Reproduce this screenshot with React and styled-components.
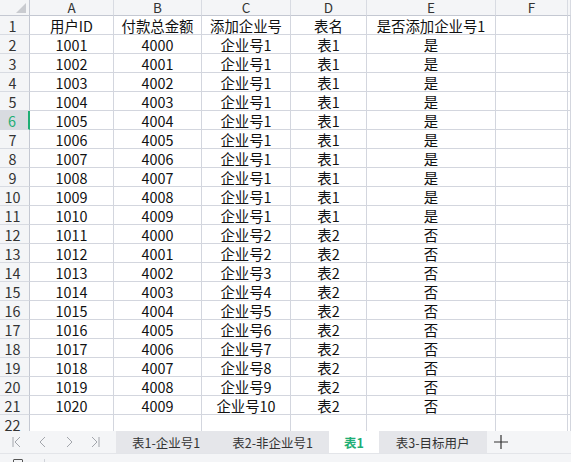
import React from "react";
import styled, { createGlobalStyle } from "styled-components";

const Global = createGlobalStyle`
  html, body { margin: 0; padding: 0; background: #fff; }
  body { width: 571px; height: 462px; overflow: hidden;
    font-family: "Microsoft YaHei", "Noto Sans CJK SC", "Noto Sans", sans-serif; }
`;

const Page = styled.div`
  width: 571px;
  height: 462px;
  display: flex;
  flex-direction: column;
  overflow: hidden;
`;

const SheetArea = styled.div`
  height: 431px;
  overflow: hidden;
  flex: none;
`;

const Grid = styled.div`
  display: grid;
  grid-template-columns: 30px 84px 88px 89px 76px 129px 72px 1fr;
  grid-auto-rows: 19px;
  grid-template-rows: 16px;
`;

const Cell = styled.div`
  box-sizing: border-box;
  border-right: 1px solid #d3d6de;
  border-bottom: 1px solid #d3d6de;
  font-size: 14.4px;
  line-height: 19px;
  color: #111;
  text-align: center;
  white-space: nowrap;
`;

const ColHead = styled(Cell)`
  background: #f4f5f7;
  color: #333;
  font-size: 13.5px;
  line-height: 15px;
  border-right-color: #d8dbe2;
  border-bottom-color: #c4c8d2;
`;

const Corner = styled(ColHead)`
  position: relative;
  border-right-color: #c4c8d2;
  &::after {
    content: "";
    position: absolute;
    right: 3px;
    bottom: 2px;
    width: 0;
    height: 0;
    border-left: 10px solid transparent;
    border-bottom: 10px solid #c9cbd0;
  }
`;

const RowHead = styled(Cell)`
  background: ${(p) => (p.$active ? "#d8dbe0" : "#f4f5f7")};
  color: ${(p) => (p.$active ? "#1fae74" : "#333")};
  border-right: ${(p) => (p.$active ? "2px solid #1fae74" : "1px solid #c4c8d2")};
  border-bottom-color: #d8dbe2;
  padding-right: 4px;
`;

const TabBar = styled.div`
  height: 22px;
  flex: none;
  display: flex;
  align-items: stretch;
  background: #f4f5f7;
  border-bottom: 1px solid #e3e5e9;
`;

const NavGroup = styled.div`
  width: 116px;
  display: flex;
  align-items: center;
  padding-left: 10px;
  box-sizing: border-box;
  gap: 12px;
  color: #a3a6ac;
`;

const Tabs = styled.div`
  display: flex;
  background: #e5e6ea;
`;

const Tab = styled.div`
  padding: 0 ${(p) => p.$pad || 16}px;
  display: flex;
  align-items: center;
  font-size: 12.5px;
  color: ${(p) => (p.$active ? "#1fae74" : "#333")};
  font-weight: ${(p) => (p.$active ? 700 : 400)};
  background: ${(p) => (p.$active ? "#fff" : "transparent")};
  white-space: nowrap;
`;

const AddBtn = styled.div`
  width: 28px;
  display: flex;
  align-items: center;
  justify-content: center;
  color: #333;
`;

const StatusBar = styled.div`
  flex: 1;
  background: #f4f5f7;
  display: flex;
  align-items: flex-start;
  padding-top: 5px;
  box-sizing: border-box;
`;

const StatusIcon = styled.div`
  width: 10px;
  height: 10px;
  margin-left: 13px;
  border: 1.5px solid #555;
  border-radius: 1px;
  box-sizing: border-box;
`;

const Divider = styled.div`
  width: 1px;
  height: 10px;
  background: #d0d3d9;
  margin-left: 21px;
`;

const Nav = ({ d }) => (
  <svg width="14" height="14" viewBox="0 0 14 14" fill="none" stroke="currentColor" strokeWidth="1">
    {d}
  </svg>
);

const cols = ["A", "B", "C", "D", "E", "F"];

const rows = [["用户ID", "付款总金额", "添加企业号", "表名", "是否添加企业号1", ""]];
for (let i = 0; i < 20; i++) {
  const first = i < 10;
  rows.push([
    String(1001 + i),
    String(4000 + (i % 10)),
    first ? "企业号1" : `企业号${Math.max(2, i - 9)}`,
    first ? "表1" : "表2",
    first ? "是" : "否",
    "",
  ]);
}
rows.push(["", "", "", "", "", ""]);

export default function App() {
  return (
    <Page>
      <Global />
      <SheetArea>
        <Grid>
          <Corner />
          {cols.map((c) => (
            <ColHead key={c}>{c}</ColHead>
          ))}
          <ColHead />
          {rows.map((r, i) => (
            <React.Fragment key={i}>
              <RowHead $active={i === 5}>{i + 1}</RowHead>
              {r.map((v, j) => (
                <Cell key={j}>{v}</Cell>
              ))}
              <Cell />
            </React.Fragment>
          ))}
        </Grid>
      </SheetArea>
      <TabBar>
        <NavGroup>
          <Nav d={<><path d="M3 2v10" /><path d="M10 2 5 7l5 5" /></>} />
          <Nav d={<path d="M9 2 4 7l5 5" />} />
          <Nav d={<path d="M5 2l5 5-5 5" />} />
          <Nav d={<><path d="M11 2v10" /><path d="M4 2l5 5-5 5" /></>} />
        </NavGroup>
        <Tabs>
          <Tab $pad={16}>表1-企业号1</Tab>
          <Tab $pad={16}>表2-非企业号1</Tab>
          <Tab $active $pad={15}>表1</Tab>
          <Tab $pad={17}>表3-目标用户</Tab>
        </Tabs>
        <AddBtn>
          <svg width="14" height="14" viewBox="0 0 14 14" stroke="currentColor" strokeWidth="1.2">
            <path d="M7 0v14M0 7h14" />
          </svg>
        </AddBtn>
      </TabBar>
      <StatusBar>
        <StatusIcon />
        <Divider />
      </StatusBar>
    </Page>
  );
}
